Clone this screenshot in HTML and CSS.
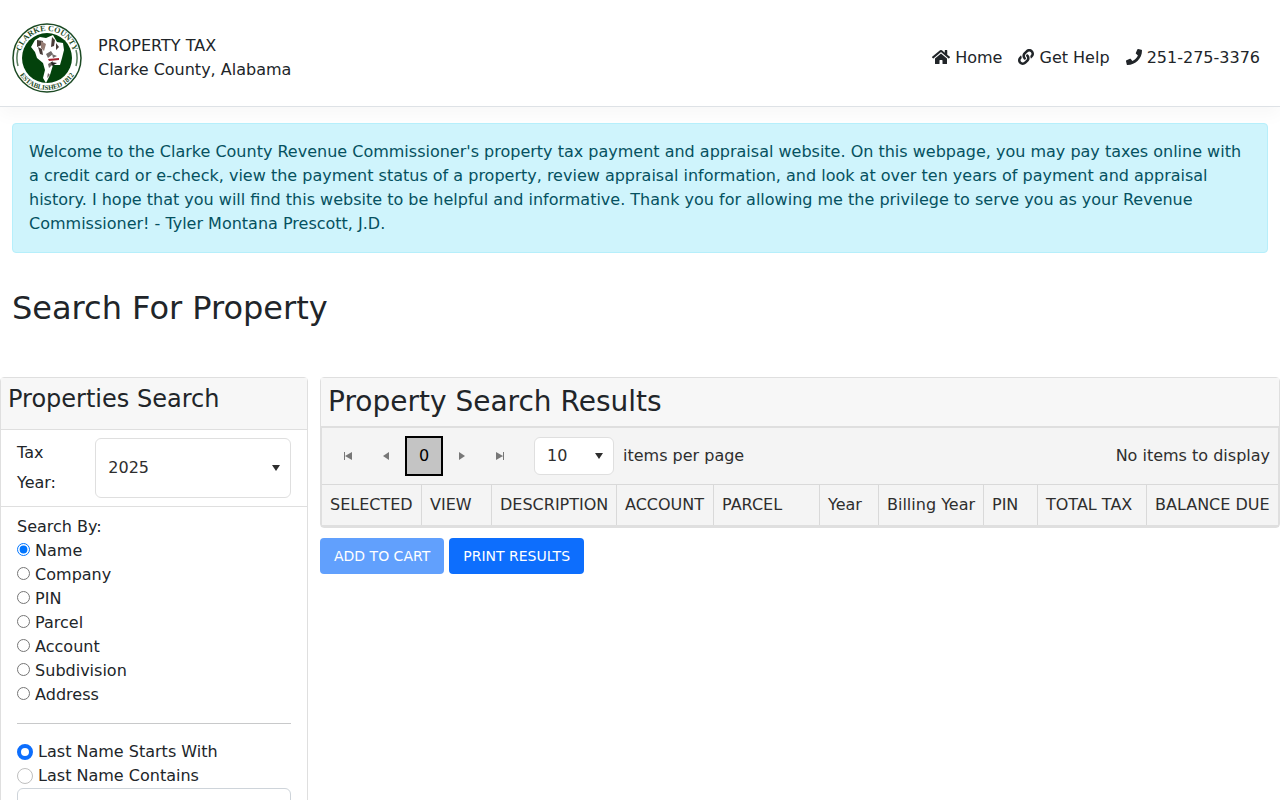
FILE: index.html
```html
<!DOCTYPE html>
<html lang="en">
<head>
  <meta charset="UTF-8" />
  <meta name="viewport" content="width=device-width, initial-scale=1.0"/>
  <title>Property Tax - Clarke County, Alabama</title>
  <link rel="stylesheet" href="styles.css">
</head>
<body>
  <header class="navbar">
    <a class="brand" href="#">
      <svg class="logo" viewBox="0 0 70 70" aria-hidden="true">
        <circle cx="35" cy="35" r="34" fill="#fff" stroke="#1c4a24" stroke-width="1.500"/>
        <circle cx="35" cy="35" r="25" fill="#03420c"/>
        <path d="M6 27 A30 30 0 0 0 6 43 M64 27 A30 30 0 0 1 64 43" fill="none" stroke="#587c5d" stroke-width="1.500"/>
        <path d="M23 17l5-3 6 1 7-3 4 7 6 1 1 7-2 8-2 7-7 0-3 10-4 8-3-5 2-8-2-7-6-5-2-6-4-5z" fill="#fff"/>
        <path d="M25 17l6 1-1 4-5 2zM26 24l4 2 1 6-3-1zM40 14l3 3-1 6-3 1zM44 20l3 4-3 3z" fill="#493c38"/>
        <path d="M29 18l5 3-2 7-3-3z" fill="#967d74"/>
        <path d="M34 31l5-3 2 3-5 4zM36 41l5-3-1 4-3 3zM40 31l5 2-4 2zM36 50l2 2-3 3z" fill="#706967"/>
        <path d="M36 36l11-1v2l-10 1z" fill="#a52430"/>
        <path d="M39 39l6 1-5 3z" fill="#262323"/>
        <path id="arcTop" d="M8 35 A27 27 0 0 1 62 35" fill="none"/>
        <path id="arcBottom" d="M3 35 A32 32 0 0 0 67 35" fill="none"/>
        <text class="logo-text"><textPath href="#arcTop" startOffset="50%" text-anchor="middle">CLARKE COUNTY</textPath></text>
        <text class="logo-text logo-text-sm"><textPath href="#arcBottom" startOffset="50%" text-anchor="middle">ESTABLISHED 1812</textPath></text>
      </svg>
      <span>PROPERTY TAX<br>Clarke County, Alabama</span>
    </a>
    <nav class="nav-links">
      <a href="#"><svg class="icon icon-wide" viewBox="0 0 576 512"><path d="M280.370 148.260L96 300.110V464a16 16 0 0 0 16 16l112.060-.29a16 16 0 0 0 15.920-16V368a16 16 0 0 1 16-16h64a16 16 0 0 1 16 16v95.640a16 16 0 0 0 16 16.050L464 480a16 16 0 0 0 16-16V300L295.670 148.260a12.190 12.190 0 0 0-15.300 0zM571.600 251.470L488 182.560V44.050a12 12 0 0 0-12-12h-56a12 12 0 0 0-12 12v72.610L318.470 43a48 48 0 0 0-61 0L4.340 251.470a12 12 0 0 0-1.600 16.900l25.500 31A12 12 0 0 0 45.150 301l235.220-193.740a12.190 12.190 0 0 1 15.300 0L530.900 301a12 12 0 0 0 16.900-1.600l25.500-31a12 12 0 0 0-1.700-16.930z"/></svg> Home</a>
      <a href="#"><svg class="icon" viewBox="0 0 512 512"><path d="M326.612 185.391c59.747 59.809 58.927 155.698.36 214.59-.11.12-.24.25-.36.37l-67.2 67.2c-59.27 59.27-155.699 59.262-214.96 0-59.27-59.26-59.27-155.7 0-214.96l37.106-37.106c9.84-9.84 26.786-3.3 27.294 10.606.648 17.722 3.826 35.527 9.69 52.721 1.986 5.822.567 12.262-3.783 16.612l-13.087 13.087c-28.026 28.026-28.905 73.66-1.155 101.96 28.024 28.579 74.086 28.749 102.325.51l67.2-67.19c28.191-28.191 28.073-73.757 0-101.83-3.701-3.694-7.429-6.564-10.341-8.569a16.037 16.037 0 0 1-6.947-12.606c-.396-10.567 3.348-21.456 11.698-29.806l21.054-21.055c5.521-5.521 14.182-6.199 20.584-1.731a152.482 152.482 0 0 1 20.522 17.197zM467.547 44.449c-59.261-59.262-155.69-59.27-214.96 0l-67.2 67.2c-.12.12-.25.25-.36.37-58.566 58.892-59.387 154.781.36 214.59a152.454 152.454 0 0 0 20.521 17.196c6.402 4.468 15.064 3.789 20.584-1.731l21.054-21.055c8.35-8.35 12.094-19.239 11.698-29.806a16.037 16.037 0 0 0-6.947-12.606c-2.912-2.005-6.64-4.875-10.341-8.569-28.073-28.073-28.191-73.639 0-101.83l67.2-67.19c28.239-28.239 74.3-28.069 102.325.51 27.75 28.3 26.872 73.934-1.155 101.96l-13.087 13.087c-4.35 4.35-5.769 10.79-3.783 16.612 5.864 17.194 9.042 34.999 9.69 52.721.509 13.906 17.454 20.446 27.294 10.606l37.106-37.106c59.271-59.259 59.271-155.699.001-214.959z"/></svg> Get Help</a>
      <a href="tel:2512753376"><svg class="icon" viewBox="0 0 512 512"><path d="M493.4 24.6l-104-24c-11.3-2.6-22.9 3.3-27.5 13.9l-48 112c-4.2 9.8-1.4 21.3 6.9 28l60.6 49.600c-36 76.700-98.900 140.500-177.200 177.200l-49.600-60.600c-6.800-8.300-18.200-11.100-28-6.900l-112 48C3.900 366.500-2 378.100.6 389.400l24 104C27.100 504.200 36.700 512 48 512c256.100 0 464-207.500 464-464 0-11.200-7.700-20.900-18.600-23.400z"/></svg> 251-275-3376</a>
    </nav>
  </header>

  <div class="container">
    <div class="alert">
      Welcome to the Clarke County Revenue Commissioner's property tax payment and appraisal website. On this webpage, you may pay taxes online with a credit card or e-check, view the payment status of a property, review appraisal information, and look at over ten years of payment and appraisal history. I hope that you will find this website to be helpful and informative. Thank you for allowing me the privilege to serve you as your Revenue Commissioner! - Tyler Montana Prescott, J.D.
    </div>
    <h2>Search For Property</h2>
  </div>

  <main class="row">
    <div class="col-search">
      <form class="card" id="searchForm">
        <div class="card-header">
          <h4>Properties Search</h4>
        </div>
        <div class="tax-year">
          <label for="taxYear">Tax Year:</label>
          <div class="select-wrap">
            <select id="taxYear" name="taxYear">
              <option selected>2025</option>
              <option>2024</option>
              <option>2023</option>
            </select>
          </div>
        </div>
        <div class="search-by">
          <div>Search By:</div>
          <div><input type="radio" name="searchBy" id="byName" checked> <label for="byName">Name</label></div>
          <div><input type="radio" name="searchBy" id="byCompany"> <label for="byCompany">Company</label></div>
          <div><input type="radio" name="searchBy" id="byPin"> <label for="byPin">PIN</label></div>
          <div><input type="radio" name="searchBy" id="byParcel"> <label for="byParcel">Parcel</label></div>
          <div><input type="radio" name="searchBy" id="byAccount"> <label for="byAccount">Account</label></div>
          <div><input type="radio" name="searchBy" id="bySubdivision"> <label for="bySubdivision">Subdivision</label></div>
          <div><input type="radio" name="searchBy" id="byAddress"> <label for="byAddress">Address</label></div>
          <hr>
          <div><input class="form-check" type="radio" name="match" id="startsWith" checked> <label for="startsWith">Last Name Starts With</label></div>
          <div><input class="form-check" type="radio" name="match" id="contains"> <label for="contains">Last Name Contains</label></div>
          <input class="form-control" type="text" name="lastName" aria-label="Last Name">
        </div>
      </form>
    </div>

    <div class="col-results">
      <div class="card results">
        <div class="card-header">
          <h3>Property Search Results</h3>
        </div>
        <div class="grid">
          <div class="pager">
            <button type="button" class="page-btn" aria-label="First page"><svg viewBox="0 0 8 8"><path d="M0 0h1v8H0zM8 0v8L1 4z"/></svg></button>
            <button type="button" class="page-btn" aria-label="Previous page"><svg viewBox="0 0 8 8"><path d="M7 0v8L1 4z"/></svg></button>
            <button type="button" class="page-btn current">0</button>
            <button type="button" class="page-btn" aria-label="Next page"><svg viewBox="0 0 8 8"><path d="M1 0v8l6-4z"/></svg></button>
            <button type="button" class="page-btn" aria-label="Last page"><svg viewBox="0 0 8 8"><path d="M7 0h1v8H7zM0 0v8l7-4z"/></svg></button>
            <div class="select-wrap page-size">
              <select id="pageSize">
                <option selected>10</option>
                <option>20</option>
                <option>50</option>
              </select>
            </div>
            <label for="pageSize">items per page</label>
            <span class="pager-info">No items to display</span>
          </div>
          <table>
            <colgroup>
              <col class="col-selected"><col class="col-view"><col class="col-description"><col class="col-account"><col class="col-parcel">
              <col class="col-year"><col class="col-billing"><col class="col-pin"><col class="col-total"><col class="col-balance">
            </colgroup>
            <thead>
              <tr>
                <th>SELECTED</th>
                <th>VIEW</th>
                <th>DESCRIPTION</th>
                <th>ACCOUNT</th>
                <th>PARCEL</th>
                <th>Year</th>
                <th>Billing Year</th>
                <th>PIN</th>
                <th>TOTAL TAX</th>
                <th>BALANCE DUE</th>
              </tr>
            </thead>
          </table>
        </div>
      </div>
      <div class="actions">
        <button type="button" class="btn" disabled>ADD TO CART</button>
        <button type="button" class="btn">PRINT RESULTS</button>
      </div>
    </div>
  </main>
</body>
</html>
```
FILE: styles.css
```css
* {
  box-sizing: border-box;
}
body {
  margin: 0;
  font-family: "DejaVu Sans", sans-serif;
  font-size: 16px;
  line-height: 24px;
  color: #212529;
  background: #fff;
}
h2, h3, h4 {
  margin: 0;
  font-weight: 400;
}
a {
  color: inherit;
  text-decoration: none;
}

/* header */
.navbar {
  display: flex;
  justify-content: space-between;
  align-items: center;
  padding: 23px 20px 13px 12px;
  border-bottom: 1px solid #dee2e6;
  box-shadow: 0 8px 16px rgba(0,0,0,0.03);
}
.brand {
  display: flex;
  align-items: center;
  gap: 16px;
}
.logo {
  width: 70px;
  height: 70px;
}
.logo-text {
  font-family: "Liberation Serif", serif;
  font-size: 8px;
  font-weight: bold;
  fill: #1c4a24;
}
.logo-text-sm {
  font-size: 7px;
}
.nav-links {
  display: flex;
  gap: 16px;
}
.icon {
  width: 16px;
  height: 16px;
  vertical-align: -2px;
  fill: #212529;
}
.icon-wide {
  width: 18px;
}

.container {
  padding: 16px 12px 50px;
}
.alert {
  padding: 16px;
  border: 1px solid #b6effb;
  border-radius: 4px;
  background: #cff4fc;
  color: #055160;
}
.container h2 {
  margin-top: 36px;
  font-size: 32px;
  line-height: 38px;
}

/* main columns */
.row {
  display: grid;
  grid-template-columns: minmax(0, 1fr) minmax(0, 3fr);
}
.col-search {
  padding-right: 12px;
}
.card {
  border: 1px solid #dfdfdf;
  border-radius: 4px;
}
.card-header {
  padding: 7px 7px 15px;
  background: #f7f7f7;
  border-bottom: 1px solid #dfdfdf;
}
.card-header h4 {
  font-size: 24px;
  line-height: 29px;
}
.card-header h3 {
  font-size: 28px;
  line-height: 34px;
}

.tax-year {
  display: grid;
  grid-template-columns: 2fr 5fr;
  align-items: center;
  padding: 8px 16px;
  line-height: 30px;
  border-bottom: 1px solid #dfdfdf;
}
.tax-year label {
  padding-right: 24px;
}
.tax-year .select-wrap {
  height: 60px;
}
.select-wrap {
  position: relative;
}
.select-wrap::after {
  content: "";
  position: absolute;
  right: 11px;
  top: 50%;
  margin-top: -3px;
  border: 4px solid transparent;
  border-top: 6px solid #2e2e2e;
  border-bottom: 0;
  pointer-events: none;
}
select {
  appearance: none;
  width: 100%;
  height: 100%;
  padding: 0 12px;
  border: 1px solid #dfdfdf;
  border-radius: 6px;
  background: #fff;
  color: #2e2e2e;
  font: inherit;
}

.search-by {
  padding: 8px 16px 16px;
}
.search-by input[type="radio"] {
  margin: 0;
}
hr {
  margin: 16px 0;
  border: 0;
  border-top: 1px solid #c8c9ca;
}
.search-by input.form-check {
  appearance: none;
  width: 16px;
  height: 16px;
  margin-top: 4px;
  vertical-align: top;
  border: 1px solid #bfbfbf;
  border-radius: 50%;
  background: #fff;
}
.search-by input.form-check:checked {
  border: 4px solid #0d6efd;
}
.form-control {
  display: block;
  width: 100%;
  height: 38px;
  padding: 6px 12px;
  border: 1px solid #ced4da;
  border-radius: 6px;
  font: inherit;
}

/* results grid */
.results .card-header {
  padding: 7px;
}
.grid {
  border: 1px solid #dfdfdf;
  border-bottom-width: 2px;
  background: #f4f4f4;
  color: #2e2e2e;
}
.pager {
  display: flex;
  align-items: center;
  padding: 8px 8px 8px 7px;
}
.page-btn {
  display: flex;
  align-items: center;
  justify-content: center;
  width: 38px;
  height: 40px;
  padding: 0;
  border: 0;
  background: none;
  font: inherit;
}
.page-btn svg {
  width: 8px;
  height: 8px;
  fill: #777;
}
.page-btn.current {
  border: 2px solid #000;
  background: #c4c4c4;
  color: #000;
}
.page-size {
  width: 80px;
  height: 38px;
  margin: 0 9px 0 15px;
}
.pager-info {
  margin-left: auto;
}
table {
  width: 100%;
  table-layout: fixed;
  border-collapse: separate;
  border-spacing: 0;
  border-top: 1px solid #d9d9d9;
}
th {
  height: 40px;
  padding: 0 8px;
  border-left: 1px solid #d9d9d9;
  font-weight: 400;
  text-align: left;
  white-space: nowrap;
}
th:first-child {
  border-left: 0;
}
.col-selected { width: 99px; }
.col-view { width: 70px; }
.col-description { width: 125px; }
.col-account { width: 97px; }
.col-parcel { width: 106px; }
.col-year { width: 59px; }
.col-billing { width: 105px; }
.col-pin { width: 54px; }
.col-total { width: 109px; }
.col-balance { width: 132px; }

.actions {
  display: flex;
  gap: 5px;
  margin-top: 10px;
}
.btn {
  height: 36px;
  padding: 0 14px;
  border: 0;
  border-radius: 4px;
  background: #0d6efd;
  color: #fff;
  font-family: inherit;
  font-size: 14px;
}
.btn:disabled {
  opacity: 0.65;
}
```
